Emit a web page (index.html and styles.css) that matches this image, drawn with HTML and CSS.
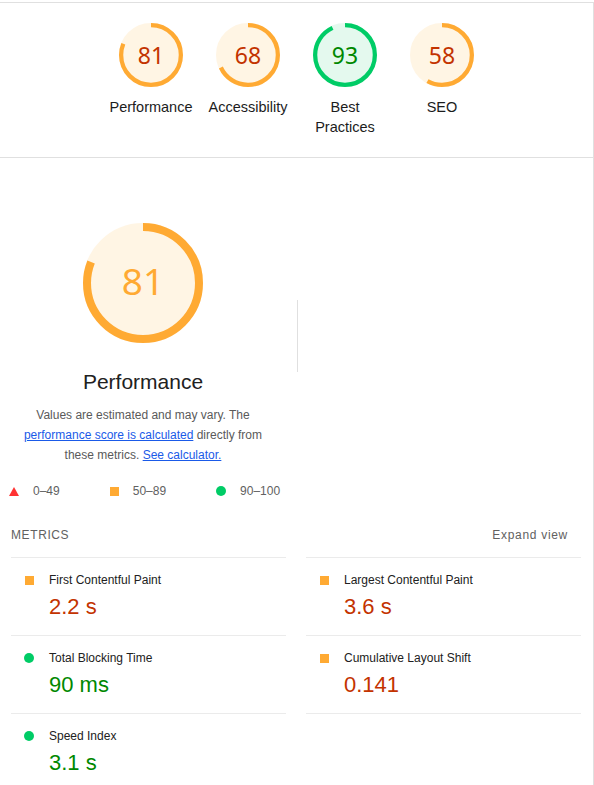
FILE: index.html
```html
<!DOCTYPE html>
<html lang="en">
<head>
<meta charset="utf-8">
<title>Lighthouse Report</title>
<link rel="stylesheet" href="styles.css">
</head>
<body>
<div class="report">
  <header class="scores-header">
    <div class="score-item">
      <div class="gauge gauge--sm avg">
        <svg class="gauge-svg" viewBox="0 0 120 120">
          <circle class="g-base" cx="60" cy="60" r="56" stroke-width="8"/>
          <circle class="g-arc" cx="60" cy="60" r="56" stroke-width="8" stroke-dasharray="285.0 352" transform="rotate(-90 60 60)"/>
        </svg>
        <span class="g-num">81</span>
      </div>
      <div class="score-label">Performance</div>
    </div>
    <div class="score-item">
      <div class="gauge gauge--sm avg">
        <svg class="gauge-svg" viewBox="0 0 120 120">
          <circle class="g-base" cx="60" cy="60" r="56" stroke-width="8"/>
          <circle class="g-arc" cx="60" cy="60" r="56" stroke-width="8" stroke-dasharray="239.3 352" transform="rotate(-90 60 60)"/>
        </svg>
        <span class="g-num">68</span>
      </div>
      <div class="score-label">Accessibility</div>
    </div>
    <div class="score-item">
      <div class="gauge gauge--sm pass">
        <svg class="gauge-svg" viewBox="0 0 120 120">
          <circle class="g-base" cx="60" cy="60" r="56" stroke-width="8"/>
          <circle class="g-arc" cx="60" cy="60" r="56" stroke-width="8" stroke-dasharray="327.2 352" transform="rotate(-90 60 60)"/>
        </svg>
        <span class="g-num">93</span>
      </div>
      <div class="score-label">Best Practices</div>
    </div>
    <div class="score-item">
      <div class="gauge gauge--sm avg">
        <svg class="gauge-svg" viewBox="0 0 120 120">
          <circle class="g-base" cx="60" cy="60" r="56" stroke-width="8"/>
          <circle class="g-arc" cx="60" cy="60" r="56" stroke-width="8" stroke-dasharray="204.1 352" transform="rotate(-90 60 60)"/>
        </svg>
        <span class="g-num">58</span>
      </div>
      <div class="score-label">SEO</div>
    </div>
  </header>

  <section class="category">
    <div class="cat-header">
      <div class="cat-left">
        <div class="gauge gauge--lg avg">
          <svg class="gauge-svg" viewBox="0 0 120 120">
            <circle class="g-base" cx="60" cy="60" r="56" stroke-width="8"/>
            <circle class="g-arc" cx="60" cy="60" r="56" stroke-width="8" stroke-dasharray="285.0 352" transform="rotate(-90 60 60)"/>
          </svg>
          <span class="g-num g-num--lg">81</span>
        </div>
        <div class="cat-title">Performance</div>
        <div class="cat-desc">
          <span class="desc-line">Values are estimated and may vary. The</span>
          <span class="desc-line"><a href="#">performance score is calculated</a> directly from</span>
          <span class="desc-line">these metrics. <a href="#">See calculator.</a></span>
        </div>
      </div>
      <div class="vdivider"></div>
      <div class="cat-right"></div>
    </div>

    <div class="scale">
      <div class="scale-item">
        <svg class="ind ind--tri" viewBox="0 0 10 9"><polygon points="5,0 10,9 0,9"/></svg>
        <span>0–49</span>
      </div>
      <div class="scale-item">
        <span class="ind ind--sq"></span>
        <span>50–89</span>
      </div>
      <div class="scale-item">
        <span class="ind ind--dot"></span>
        <span>90–100</span>
      </div>
    </div>

    <div class="metrics-head">
      <span class="metrics-title">METRICS</span>
      <span class="metrics-toggle">Expand view</span>
    </div>

    <div class="metrics">
      <div class="metric">
        <span class="ind ind--sq"></span>
        <div class="metric-title">First Contentful Paint</div>
        <div class="metric-value val-avg">2.2 s</div>
      </div>
      <div class="metric">
        <span class="ind ind--sq"></span>
        <div class="metric-title">Largest Contentful Paint</div>
        <div class="metric-value val-avg">3.6 s</div>
      </div>
      <div class="metric">
        <span class="ind ind--dot"></span>
        <div class="metric-title">Total Blocking Time</div>
        <div class="metric-value val-pass">90 ms</div>
      </div>
      <div class="metric">
        <span class="ind ind--sq"></span>
        <div class="metric-title">Cumulative Layout Shift</div>
        <div class="metric-value val-avg">0.141</div>
      </div>
      <div class="metric">
        <span class="ind ind--dot"></span>
        <div class="metric-title">Speed Index</div>
        <div class="metric-value val-pass">3.1 s</div>
      </div>
    </div>
  </section>
</div>
</body>
</html>
```

FILE: styles.css
```css
* { box-sizing: border-box; }

html, body {
  margin: 0;
  padding: 0;
  background: #fff;
}

body {
  font-family: "Liberation Sans", Arial, Helvetica, sans-serif;
  color: #212121;
}

.report {
  width: 594px;
  margin-top: 2px;
  border-top: 1px solid #e0e0e0;
  border-right: 1px solid #e0e0e0;
  min-height: 783px;
}

/* ---------- top scores header ---------- */
.scores-header {
  display: flex;
  justify-content: center;
  padding: 20px 0 20px;
  border-bottom: 1px solid #e0e0e0;
}

.score-item {
  width: 97px;
  display: flex;
  flex-direction: column;
  align-items: center;
}

.score-label {
  margin-top: 10px;
  max-width: 88px;
  font-size: 14.5px;
  line-height: 20px;
  text-align: center;
  color: #1c1c1c;
}

/* ---------- gauges ---------- */
.gauge {
  display: grid;
  place-items: center;
}

.gauge > * {
  grid-area: 1 / 1;
}

.gauge--sm {
  width: 64px;
  height: 64px;
}

.gauge--lg {
  width: 120px;
  height: 120px;
}

.gauge-svg {
  display: block;
  width: 100%;
  height: 100%;
}

.g-arc {
  fill: none;
}

.avg .g-base {
  fill: #ffa400;
  stroke: #ffa400;
  opacity: 0.1;
}

.avg .g-arc {
  stroke: #ffaa33;
}

.pass .g-base {
  fill: #00cc66;
  stroke: #00cc66;
  opacity: 0.1;
}

.pass .g-arc {
  stroke: #00cc66;
}

.g-num {
  font-family: "Noto Sans", "Open Sans", sans-serif;
  font-size: 23px;
  line-height: 1;
}

.avg .g-num {
  color: #c33300;
}

.pass .g-num {
  color: #008800;
}

.avg .g-num--lg {
  font-size: 37px;
  color: #ffaa33;
  margin-top: -5px;
}

/* ---------- category ---------- */
.category {
  padding: 65px 12px 0 11px;
}

.cat-header {
  display: grid;
  grid-template-columns: 264px 1px 1fr;
  column-gap: 22px;
}

.cat-left {
  display: flex;
  flex-direction: column;
  align-items: center;
}

.cat-title {
  margin-top: 27px;
  font-size: 21px;
  line-height: 24px;
  color: #212121;
}

.cat-desc {
  margin-top: 11px;
  display: flex;
  flex-direction: column;
  align-items: center;
  font-size: 12px;
  line-height: 20px;
  color: #5a5a5a;
}

.desc-line {
  display: block;
  white-space: nowrap;
}

.cat-desc a {
  color: #1a5ae8;
  text-decoration: underline;
}

.vdivider {
  margin-top: 77px;
  height: 72px;
  background: #e0e0e0;
  align-self: start;
}

/* ---------- score scale legend ---------- */
.scale {
  display: flex;
  gap: 50px;
  margin: 18px 0 0 -2px;
  font-size: 12px;
  line-height: 16px;
  color: #616161;
}

.scale-item {
  display: flex;
  align-items: center;
  gap: 14px;
}

.ind {
  display: block;
  flex: none;
}

.ind--tri {
  width: 10px;
  height: 9px;
  fill: #ff3333;
}

.ind--sq {
  width: 9px;
  height: 9px;
  background: #ffaa33;
}

.ind--dot {
  width: 10px;
  height: 10px;
  border-radius: 50%;
  background: #00cc66;
}

/* ---------- metrics ---------- */
.metrics-head {
  display: flex;
  justify-content: space-between;
  align-items: center;
  margin-top: 28px;
  padding-right: 13px;
  margin-bottom: 14px;
  font-size: 12px;
  line-height: 16px;
  color: #616161;
}

.metrics-title {
  letter-spacing: 0.6px;
  font-weight: 500;
}

.metrics-toggle {
  letter-spacing: 0.7px;
}

.metrics {
  display: grid;
  grid-template-columns: 1fr 1fr;
  column-gap: 20px;
}

.metric {
  display: grid;
  grid-template-columns: 38px 1fr;
  grid-template-rows: 16px 26px;
  row-gap: 6px;
  align-items: center;
  padding: 14px 0 15px;
  border-bottom: 1px solid #ebebeb;
}

.metric:nth-child(-n+2) {
  border-top: 1px solid #ebebeb;
}

.metric .ind {
  grid-column: 1;
  grid-row: 1;
  margin-left: 14px;
}

.metric .ind--dot {
  margin-left: 13px;
}

.metric-title {
  grid-column: 2;
  grid-row: 1;
  font-size: 12px;
  line-height: 16px;
  color: #212121;
}

.metric-value {
  grid-column: 2;
  grid-row: 2;
  font-size: 22px;
  line-height: 26px;
}

.val-avg {
  color: #c33300;
}

.val-pass {
  color: #008800;
}
```
